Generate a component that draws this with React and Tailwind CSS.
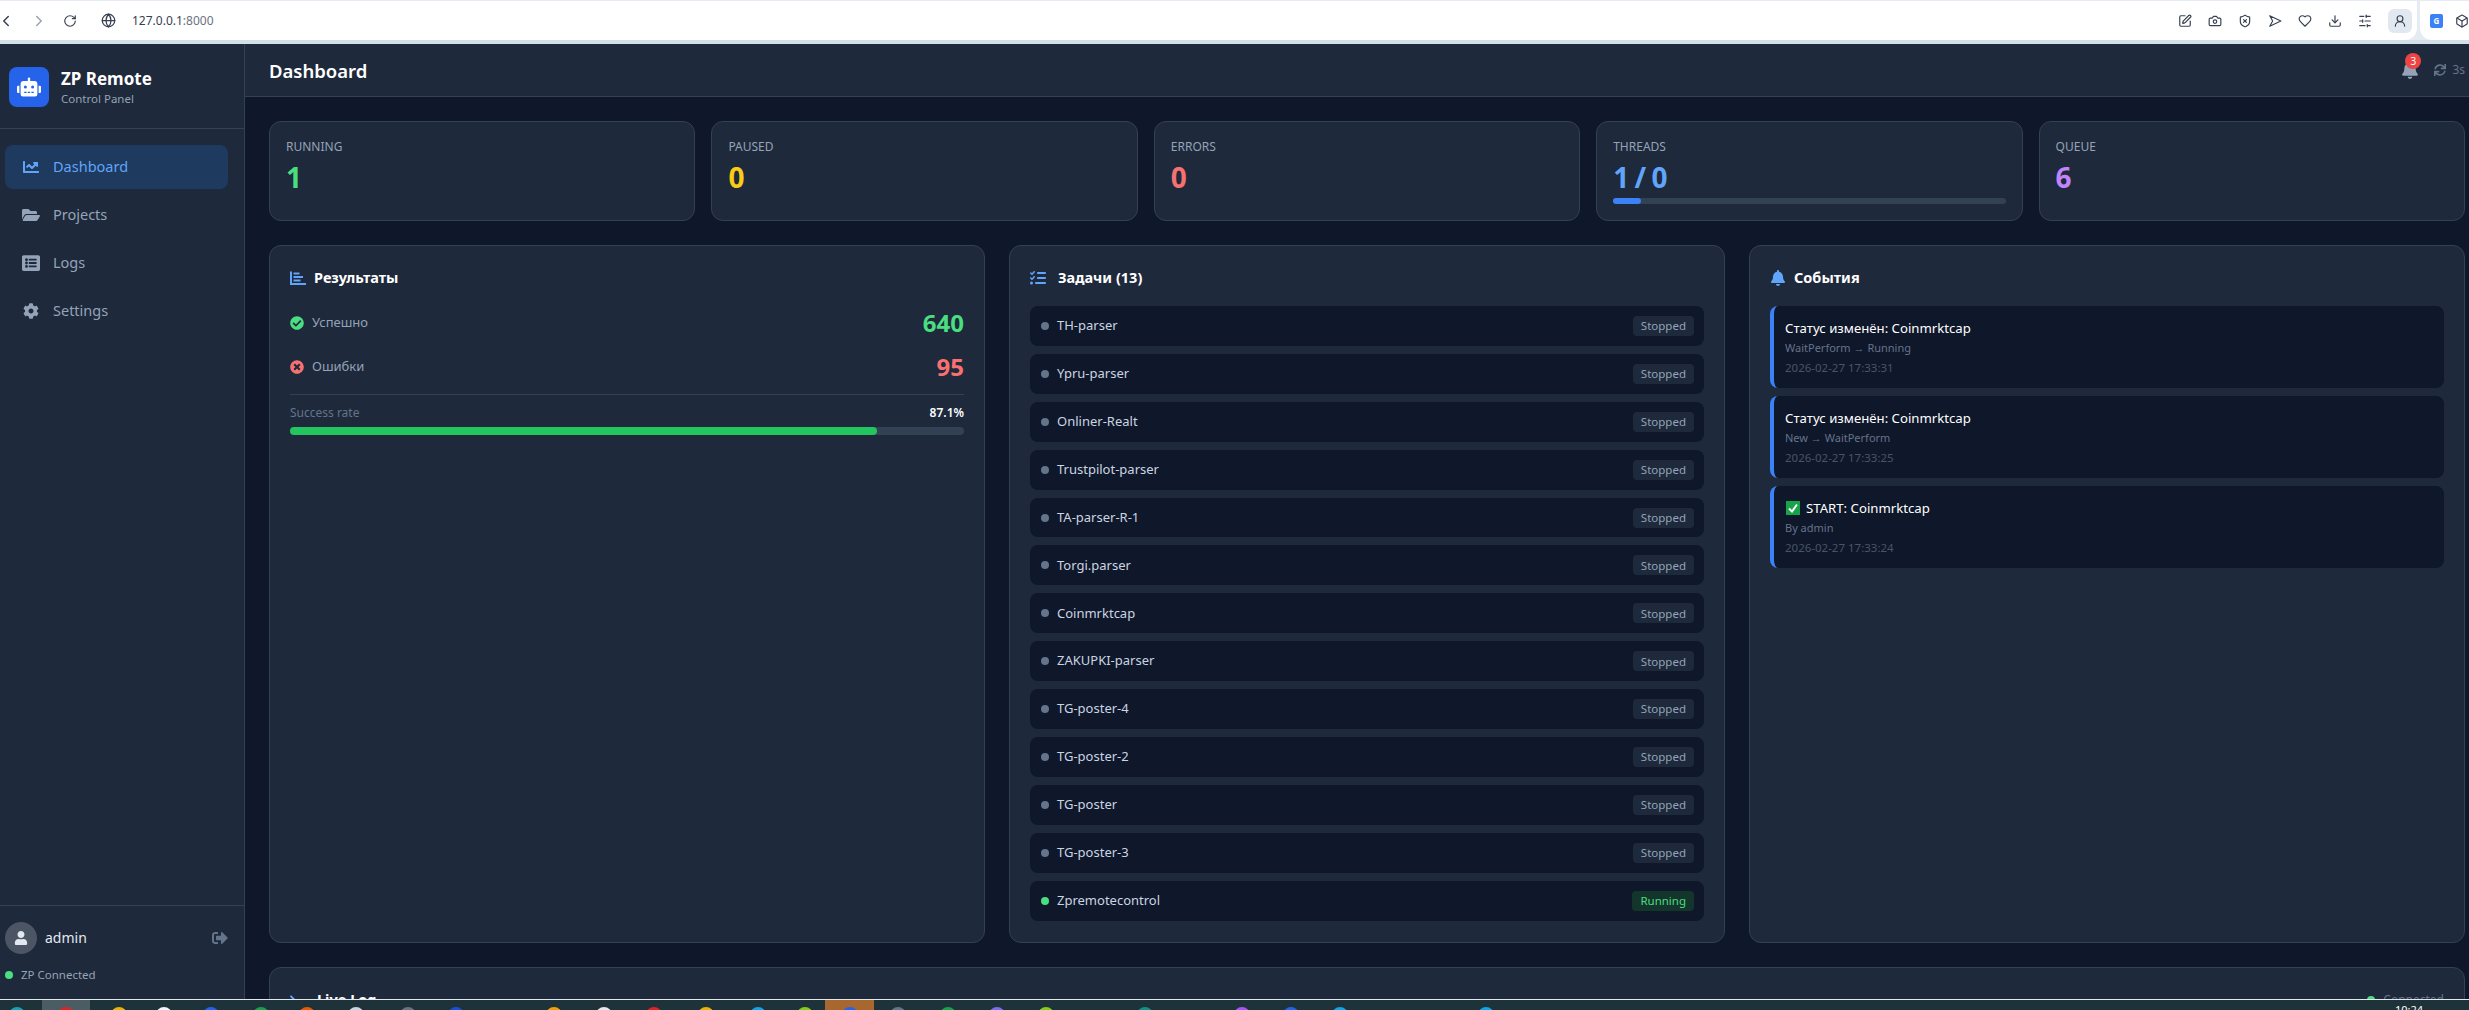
import { FaRobot, FaChartLine, FaFolderOpen, FaListAlt, FaCog, FaUser, FaSignOutAlt, FaBell, FaSync, FaCheckCircle, FaTimesCircle, FaTerminal } from 'react-icons/fa'
import { FaListCheck } from 'react-icons/fa6'
import { LuChevronLeft, LuChevronRight, LuRotateCw, LuGlobe, LuSquarePen, LuCamera, LuShieldX, LuHeart, LuDownload, LuSlidersHorizontal, LuUserRound, LuBox } from 'react-icons/lu'

const tasks = ['TH-parser', 'Ypru-parser', 'Onliner-Realt', 'Trustpilot-parser', 'TA-parser-R-1', 'Torgi.parser', 'Coinmrktcap', 'ZAKUPKI-parser', 'TG-poster-4', 'TG-poster-2', 'TG-poster', 'TG-poster-3']

const events = [
  { title: 'Статус изменён: Coinmrktcap', sub: 'WaitPerform → Running', time: '2026-02-27 17:33:31' },
  { title: 'Статус изменён: Coinmrktcap', sub: 'New → WaitPerform', time: '2026-02-27 17:33:25' },
  { title: 'START: Coinmrktcap', sub: 'By admin', time: '2026-02-27 17:33:24', check: true },
]

function StatCard({ label, value, color, children }) {
  return (
    <div className="h-[100px] rounded-xl border border-[#334155] bg-[#1e293b] px-4 pt-[15px]">
      <div className="text-xs leading-5 text-[#94a3b8]">{label}</div>
      <div className={`text-[28px] leading-[40px] font-bold tracking-[-1px] ${color}`}>{value}</div>
      {children}
    </div>
  )
}

function NavItem({ icon: Icon, label, active, size }) {
  return (
    <div className={`flex h-11 items-center gap-[13px] rounded-lg px-[17px] text-[14.5px] ${active ? 'bg-[#1e3a5f] text-[#60a5fa]' : 'text-[#94a3b8]'}`}>
      <span className="flex w-[18px] justify-center">
        <Icon className={size} />
      </span>
      <span>{label}</span>
    </div>
  )
}

function TaskRow({ name, running }) {
  return (
    <div className="flex h-[39.9px] items-center justify-between rounded-lg bg-[#0f172a] pr-[10px] pl-[11px]">
      <div className="flex items-center gap-2">
        <span className={`h-2 w-2 rounded-full ${running ? 'bg-[#4ade80]' : 'bg-[#64748b]'}`} />
        <span className="text-[13px] text-[#cbd5e1]">{name}</span>
      </div>
      <span className={`flex h-5 items-center rounded px-2 text-[11.5px] ${running ? 'bg-[#14352c] text-[#4ade80]' : 'bg-[#1e293b] text-[#94a3b8]'}`}>
        {running ? 'Running' : 'Stopped'}
      </span>
    </div>
  )
}

function EventRow({ title, sub, time, check }) {
  return (
    <div className="h-[82px] rounded-lg border-l-4 border-[#3b82f6] bg-[#0f172a] pt-3 pl-[11px]">
      <div className="flex items-center gap-[5px] text-[13.2px] leading-5 text-white">
        {check && (
          <svg viewBox="0 0 16 16" className="h-4 w-4">
            <rect x="1" y="1" width="14" height="14" fill="#16a34a" />
            <path d="M4 8.5 7 11.5 12 4.5" fill="none" stroke="#fff" strokeWidth="2" />
          </svg>
        )}
        {title}
      </div>
      <div className="text-[11px] leading-5 text-[#64748b]">{sub}</div>
      <div className="text-[11.5px] leading-[19px] text-[#475569]">{time}</div>
    </div>
  )
}

function TopBar() {
  return (
    <div className="flex h-11 shrink-0 border-b-4 border-[#d3dfe9] bg-[#e4ebf2] pt-[1px] text-[#374151]">
      <div className="flex flex-1 items-center rounded-br-xl bg-white pr-[5px]">
        <LuChevronLeft className="ml-[-3px] h-[18px] w-[18px]" />
        <LuChevronRight className="ml-[15px] h-[18px] w-[18px] text-[#9ca3af]" />
        <LuRotateCw className="ml-[15px] h-[14px] w-[14px]" />
        <LuGlobe className="ml-[24px] h-[15px] w-[15px]" />
        <span className="ml-[16px] text-[12px] text-[#374151]">127.0.0.1<span className="text-[#6b7280]">:8000</span></span>
        <div className="ml-auto flex items-center gap-[16px]">
          <LuSquarePen className="h-[14px] w-[14px]" />
          <LuCamera className="h-[14px] w-[14px]" />
          <LuShieldX className="h-[14px] w-[14px]" />
          <svg viewBox="0 0 24 24" className="h-[14px] w-[14px]" fill="none" stroke="currentColor" strokeWidth="2" strokeLinejoin="round">
            <path d="M3 3 22 12 3 21 8 12Z" />
          </svg>
          <LuHeart className="h-[14px] w-[14px]" />
          <LuDownload className="h-[14px] w-[14px]" />
          <LuSlidersHorizontal className="h-[14px] w-[14px]" />
          <div className="flex h-6 w-6 items-center justify-center rounded-md bg-[#e2e8f0]">
            <LuUserRound className="h-[14px] w-[14px]" />
          </div>
        </div>
      </div>
      <div className="ml-[3px] flex w-[49px] items-center gap-[12px] rounded-bl-xl bg-white pl-[10px]">
        <span className="flex h-[14px] w-[13px] shrink-0 items-center justify-center rounded-[2px] bg-[#3b82f6] text-[8px] leading-none font-bold text-white">G</span>
        <LuBox className="h-[14px] w-[14px] shrink-0" />
      </div>
    </div>
  )
}

function TaskBar() {
  const icons = [
    ['#16a3b8', 17], ['#dc2626', 66], ['#eab308', 119], ['#f1f5f9', 164], ['#2563eb', 211], ['#16a34a', 261], ['#ea580c', 307],
    ['#cbd5e1', 356], ['#6b7280', 408], ['#1d4ed8', 456], ['#f59e0b', 554], ['#e5e7eb', 604], ['#dc2626', 654], ['#eab308', 706], ['#0ea5e9', 758], ['#84cc16', 805], ['#2563eb', 850],
    ['#64748b', 898], ['#16a34a', 948], ['#7c6cf0', 997], ['#84cc16', 1046], ['#0d9488', 1145], ['#a855f7', 1242], ['#2563eb', 1291], ['#0ea5e9', 1340], ['#0ea5e9', 1486],
  ]
  return (
    <div className="relative h-[11px] shrink-0 overflow-hidden border-t border-[#e5e7eb] bg-[#1d3239]">
      <div className="absolute top-0 left-[42px] h-full w-12 bg-[#4b5c63]" />
      <div className="absolute top-0 left-[825px] h-full w-[49px] bg-[#a8672f]" />
      {icons.map(([color, x]) => (
        <span key={x} className="absolute top-[7px] h-6 w-4 -translate-x-1/2 rounded-full" style={{ backgroundColor: color, left: x }} />
      ))}
      <span className="absolute top-[4px] right-[46px] text-[11px] leading-3 text-white">10:24</span>
    </div>
  )
}

export default function App() {
  return (
    <div className="flex h-screen flex-col overflow-hidden bg-[#0f172a] font-['Noto_Sans',sans-serif]">
      <TopBar />
      <div className="flex min-h-0 flex-1">
        <aside className="flex w-[245px] shrink-0 flex-col border-r border-[#334155] bg-[#1e293b]">
          <div className="flex h-[85px] shrink-0 items-center gap-3 border-b border-[#334155] pt-[1px] pl-[9px]">
            <div className="flex h-10 w-10 items-center justify-center rounded-lg bg-[#2563eb] text-white">
              <FaRobot className="h-[20px] w-[24px]" />
            </div>
            <div>
              <div className="text-[17px] leading-6 font-bold text-white">ZP Remote</div>
              <div className="text-[11.5px] leading-4 text-[#94a3b8]">Control Panel</div>
            </div>
          </div>
          <nav className="flex flex-1 flex-col gap-1 pt-4 pr-4 pl-[5px]">
            <NavItem icon={FaChartLine} label="Dashboard" size="h-4 w-4" active />
            <NavItem icon={FaFolderOpen} label="Projects" size="h-[18px] w-[18px]" />
            <NavItem icon={FaListAlt} label="Logs" size="h-[18px] w-[18px]" />
            <NavItem icon={FaCog} label="Settings" size="h-4 w-4" />
          </nav>
          <div className="h-[94px] shrink-0 border-t border-[#334155] pt-4 pr-4 pl-[5px]">
            <div className="flex items-center gap-2">
              <div className="flex h-8 w-8 items-center justify-center rounded-full bg-[#4b5563] text-[#e2e8f0]">
                <FaUser className="h-[14px] w-[14px]" />
              </div>
              <span className="text-sm text-[#e2e8f0]">admin</span>
              <FaSignOutAlt className="ml-auto h-4 w-4 text-[#64748b]" />
            </div>
            <div className="mt-3 flex items-center gap-2">
              <span className="h-2 w-2 rounded-full bg-[#4ade80]" />
              <span className="text-[11.5px] text-[#94a3b8]">ZP Connected</span>
            </div>
          </div>
        </aside>
        <main className="flex min-w-0 flex-1 flex-col overflow-hidden">
          <header className="relative flex h-[53px] shrink-0 items-center border-b border-[#334155] bg-[#1e293b] pr-1 pl-6">
            <h1 className="pt-[1px] text-[18.5px] font-semibold text-white">Dashboard</h1>
            <div className="ml-auto flex items-center">
              <div className="relative -ml-1">
                <FaBell className="h-[18px] w-[18px] text-[#94a3b8]" />
                <span className="absolute -top-[8px] -right-[2px] flex h-4 w-4 items-center justify-center rounded-full bg-[#ef4444] text-[10px] text-white">3</span>
              </div>
              <FaSync className="ml-[15px] h-3 w-3 text-[#64748b]" />
              <span className="ml-[6px] text-xs text-[#64748b]">3s</span>
            </div>
          </header>
          <div className="flex flex-col gap-6 pt-6 pr-1 pl-6">
            <div className="grid grid-cols-5 gap-4">
              <StatCard label="RUNNING" value="1" color="text-[#4ade80]" />
              <StatCard label="PAUSED" value="0" color="text-[#facc15]" />
              <StatCard label="ERRORS" value="0" color="text-[#f87171]" />
              <StatCard label="THREADS" value="1 / 0" color="text-[#60a5fa]">
                <div className="mt-[1px] h-[6px] rounded-full bg-[#334155]">
                  <div className="h-full w-[7%] rounded-full bg-[#3b82f6]" />
                </div>
              </StatCard>
              <StatCard label="QUEUE" value="6" color="text-[#c084fc]" />
            </div>
            <div className="grid h-[698px] shrink-0 grid-cols-3 gap-6">
              <section className="rounded-xl border border-[#334155] bg-[#1e293b] p-5">
                <div className="mb-[11px] flex h-6 items-center gap-2 text-[14.5px] font-bold text-white">
                  <svg viewBox="0 0 16 16" className="h-4 w-4 text-[#60a5fa]" fill="currentColor">
                    <path d="M0 1.5h2V13h14v2H0z" />
                    <path d="M3.5 2.5h6v2h-6zM3.5 6h9.5v2H3.5zM3.5 9.5h7v2h-7z" />
                  </svg>
                  Результаты
                </div>
                <div className="flex h-11 items-center justify-between">
                  <div className="flex items-center gap-2 text-[13px] text-[#94a3b8]">
                    <FaCheckCircle className="h-[14px] w-[14px] text-[#4ade80]" />
                    Успешно
                  </div>
                  <span className="text-2xl font-bold text-[#4ade80]">640</span>
                </div>
                <div className="flex h-11 items-center justify-between">
                  <div className="flex items-center gap-2 text-[13px] text-[#94a3b8]">
                    <FaTimesCircle className="h-[14px] w-[14px] text-[#f87171]" />
                    Ошибки
                  </div>
                  <span className="text-2xl font-bold text-[#f87171]">95</span>
                </div>
                <div className="mt-[5px] border-t border-[#334155] pt-2">
                  <div className="flex items-center justify-between text-xs leading-5">
                    <span className="text-[#64748b]">Success rate</span>
                    <span className="font-semibold text-white">87.1%</span>
                  </div>
                  <div className="mt-1 h-2 rounded-full bg-[#334155]">
                    <div className="h-full w-[87.1%] rounded-full bg-[#22c55e]" />
                  </div>
                </div>
              </section>
              <section className="rounded-xl border border-[#334155] bg-[#1e293b] p-5">
                <div className="mb-4 flex h-6 items-center gap-3 text-[14.5px] font-bold text-white">
                  <FaListCheck className="h-4 w-4 text-[#60a5fa]" />
                  Задачи (13)
                </div>
                <div className="flex flex-col gap-2">
                  {tasks.map((name) => (
                    <TaskRow key={name} name={name} />
                  ))}
                  <TaskRow name="Zpremotecontrol" running />
                </div>
              </section>
              <section className="rounded-xl border border-[#334155] bg-[#1e293b] p-5">
                <div className="mb-4 flex h-6 items-center gap-2 text-[14.5px] font-bold text-white">
                  <FaBell className="h-4 w-4 text-[#60a5fa]" />
                  События
                </div>
                <div className="flex flex-col gap-2">
                  {events.map((ev) => (
                    <EventRow key={ev.time} {...ev} />
                  ))}
                </div>
              </section>
            </div>
            <section className="h-20 shrink-0 rounded-xl border border-[#334155] bg-[#1e293b] p-5">
              <div className="flex h-6 items-center gap-3 text-[14.5px] font-bold text-white">
                <FaTerminal className="h-[15px] w-[15px] text-[#60a5fa]" />
                Live Log
                <span className="ml-auto flex items-center gap-2 text-xs font-normal text-[#64748b]">
                  <span className="h-2 w-2 rounded-full bg-[#4ade80]" />
                  Connected
                </span>
              </div>
            </section>
          </div>
        </main>
      </div>
      <TaskBar />
    </div>
  )
}
